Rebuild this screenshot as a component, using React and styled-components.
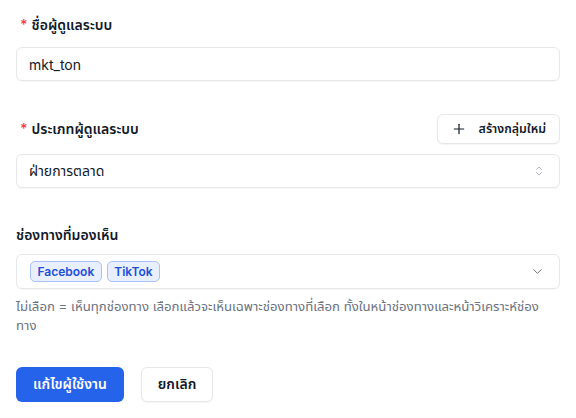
import React from "react";
import styled, { createGlobalStyle } from "styled-components";
import { Plus, ChevronDown, ChevronsUpDown } from "lucide-react";

const GlobalStyle = createGlobalStyle`
  body {
    margin: 0;
    background: #ffffff;
    font-family: "Inter", "Noto Sans Thai", "Noto Sans", sans-serif;
    color: #111827;
  }
`;

const Form = styled.div`
  padding: 14px 16px 16px 16px;
  width: 544px;
`;

const Field = styled.div`
  margin-top: ${(p) => p.$top || 0}px;
`;

const LabelRow = styled.div`
  display: flex;
  align-items: center;
  justify-content: space-between;
  height: ${(p) => p.$h || 22}px;
  margin-bottom: ${(p) => p.$gap || 10}px;
`;

const Label = styled.label`
  font-size: 14px;
  font-weight: 600;
  color: #111827;
  padding-left: ${(p) => (p.$required ? 4 : 0)}px;
`;

const Star = styled.span`
  color: #ef4444;
  margin-right: 4px;
`;

const Input = styled.div`
  box-sizing: border-box;
  height: 34px;
  border: 1px solid #e5e7eb;
  border-radius: 6px;
  display: flex;
  align-items: center;
  justify-content: space-between;
  padding: 0 14px 0 12px;
  font-size: 14px;
  color: #111827;
  box-shadow: 0 1px 1px rgba(0, 0, 0, 0.03);
`;

const MultiSelect = styled(Input)`
  height: 35px;
  padding-left: 13px;
`;

const Tags = styled.div`
  display: flex;
  gap: 5px;
`;

const Tag = styled.span`
  box-sizing: border-box;
  height: 21px;
  display: inline-flex;
  align-items: center;
  padding: 0 6.5px;
  border: 1px solid #a9c2f6;
  background: #e8efff;
  color: #1d4ed8;
  border-radius: 5px;
  font-size: 12px;
  font-weight: 600;
`;

const Help = styled.p`
  margin: 8px 0 0 0;
  padding-right: 6px;
  font-size: 13.2px;
  line-height: 19px;
  color: #6b7280;
`;

const OutlineButton = styled.button`
  box-sizing: border-box;
  height: ${(p) => p.$h || 30}px;
  padding: 0 ${(p) => p.$px || 13}px;
  border: 1px solid #e5e7eb;
  border-radius: 6px;
  background: #ffffff;
  color: #111827;
  font-family: inherit;
  font-size: ${(p) => p.$fs || 12.3}px;
  font-weight: 600;
  display: inline-flex;
  align-items: center;
  gap: 12px;
  box-shadow: 0 1px 1px rgba(0, 0, 0, 0.04);
`;

const PrimaryButton = styled.button`
  box-sizing: border-box;
  height: 35px;
  padding: 0 17px;
  border: none;
  border-radius: 6px;
  background: #2563eb;
  color: #ffffff;
  font-family: inherit;
  font-size: 14px;
  font-weight: 600;
`;

const Actions = styled.div`
  display: flex;
  gap: 17px;
  margin-top: 32px;
`;

export default function App() {
  return (
    <>
      <GlobalStyle />
      <Form>
        <Field>
          <LabelRow $gap={11}>
            <Label $required>
              <Star>*</Star>ชื่อผู้ดูแลระบบ
            </Label>
          </LabelRow>
          <Input>mkt_ton</Input>
        </Field>

        <Field $top={33}>
          <LabelRow $h={30} $gap={10}>
            <Label $required>
              <Star>*</Star>ประเภทผู้ดูแลระบบ
            </Label>
            <OutlineButton>
              <Plus size={16} strokeWidth={1.8} />
              สร้างกลุ่มใหม่
            </OutlineButton>
          </LabelRow>
          <Input>
            ฝ่ายการตลาด
            <ChevronsUpDown size={12} color="#9ca3af" strokeWidth={1.6} />
          </Input>
        </Field>

        <Field $top={36}>
          <LabelRow $gap={8}>
            <Label>ช่องทางที่มองเห็น</Label>
          </LabelRow>
          <MultiSelect>
            <Tags>
              <Tag>Facebook</Tag>
              <Tag>TikTok</Tag>
            </Tags>
            <ChevronDown size={15} color="#6b7280" strokeWidth={1.6} />
          </MultiSelect>
          <Help>
            ไม่เลือก = เห็นทุกช่องทาง เลือกแล้วจะเห็นเฉพาะช่องทางที่เลือก
            ทั้งในหน้าช่องทางและหน้าวิเคราะห์ช่องทาง
          </Help>
        </Field>

        <Actions>
          <PrimaryButton>แก้ไขผู้ใช้งาน</PrimaryButton>
          <OutlineButton $h={35} $px={16} $fs={14}>
            ยกเลิก
          </OutlineButton>
        </Actions>
      </Form>
    </>
  );
}
